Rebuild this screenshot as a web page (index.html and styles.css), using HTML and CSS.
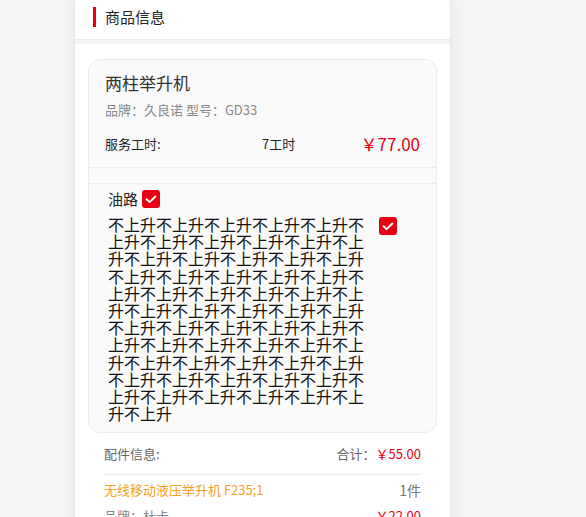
FILE: index.html
```html
<!DOCTYPE html>
<html lang="zh-CN">

<head>
    <meta charset="UTF-8">
    <meta name="viewport" content="width=device-width, initial-scale=1.0">
    <title>商品信息</title>
    <link rel="stylesheet" href="styles.css">
</head>

<body>
    <div class="page">
        <div class="section-head">
            <span class="head-bar"></span>
            <span class="head-title">商品信息</span>
        </div>
        <div class="section-gap"></div>

        <div class="content">
            <div class="goods-card">
                <div class="goods-info">
                    <div class="goods-name">两柱举升机</div>
                    <div class="goods-brand">品牌：久良诺 型号：GD33</div>
                    <div class="service-row">
                        <span class="service-label">服务工时:</span>
                        <span class="service-hours">7工时</span>
                        <span class="service-price">￥77.00</span>
                    </div>
                </div>
                <div class="card-split"></div>
                <div class="options">
                    <div class="option-head">
                        <span>油路</span>
                        <span class="check">
                            <svg viewBox="0 0 18 18" width="18" height="18">
                                <path d="M4.6 9.2l3 2.9 5.8-5.6" fill="none" stroke="#fff" stroke-width="1.9" stroke-linecap="round" stroke-linejoin="round" />
                            </svg>
                        </span>
                    </div>
                    <div class="option-row">
                        <div class="option-text">不上升不上升不上升不上升不上升不上升不上升不上升不上升不上升不上升不上升不上升不上升不上升不上升不上升不上升不上升不上升不上升不上升不上升不上升不上升不上升不上升不上升不上升不上升不上升不上升不上升不上升不上升不上升不上升不上升不上升不上升不上升不上升不上升不上升不上升不上升不上升不上升不上升不上升不上升不上升不上升不上升不上升不上升不上升不上升不上升不上升</div>
                        <span class="check">
                            <svg viewBox="0 0 18 18" width="18" height="18">
                                <path d="M4.6 9.2l3 2.9 5.8-5.6" fill="none" stroke="#fff" stroke-width="1.9" stroke-linecap="round" stroke-linejoin="round" />
                            </svg>
                        </span>
                    </div>
                </div>
            </div>

            <div class="parts">
                <div class="parts-head">
                    <span>配件信息:</span>
                    <span>合计：<em class="price">￥55.00</em></span>
                </div>
                <div class="part-row">
                    <span class="part-name">无线移动液压举升机 F235;1</span>
                    <span class="part-count">1件</span>
                </div>
                <div class="part-row">
                    <span class="part-brand">品牌：杜卡</span>
                    <em class="price">￥22.00</em>
                </div>
            </div>
        </div>
    </div>
</body>

</html>
```

FILE: styles.css
```css
body {
    margin: 0;
    background: #f4f4f4;
    font-family: "Noto Sans CJK SC", "Noto Sans", sans-serif;
    color: #222;
}

.page {
    width: 375px;
    min-height: 100vh;
    margin-left: 74px;
    background: #fff;
    border-left: 1px solid #e8e8e8;
    border-right: 1px solid #e8e8e8;
    box-shadow: 0 0 14px rgba(0, 0, 0, 0.05);
}

.section-head {
    height: 40px;
    display: flex;
    align-items: center;
    padding-left: 18px;
    border-bottom: 1px solid #ececec;
    box-sizing: border-box;
}

.head-bar {
    width: 3px;
    height: 20px;
    background: #e60012;
    margin-top: -6px;
}

.head-title {
    font-size: 15px;
    margin-left: 9px;
    margin-top: -6px;
}

.section-gap {
    height: 4px;
    background: #f5f5f5;
}

.content {
    padding: 15px 13px 0;
}

.goods-card {
    background: #fafafa;
    border: 1px solid #ebebeb;
    border-radius: 12px;
    overflow: hidden;
}

.goods-info {
    padding: 11px 16px 12px;
    border-bottom: 1px solid #ececec;
}

.goods-name {
    font-size: 17px;
    line-height: 24px;
    color: #333;
}

.goods-brand {
    font-size: 13px;
    line-height: 20px;
    color: #888;
    margin-top: 5px;
}

.service-row {
    display: flex;
    align-items: center;
    margin-top: 13px;
    font-size: 13px;
    line-height: 22px;
}

.service-label {
    width: 157px;
}

.service-hours {
    flex: 1;
}

.service-price {
    color: #e60012;
    font-size: 17px;
}

.card-split {
    height: 15px;
    border-bottom: 1px solid #ececec;
}

.options {
    padding: 5px 16px 10px 19px;
}

.option-head {
    display: flex;
    align-items: center;
    gap: 4px;
    font-size: 15px;
    line-height: 20px;
}

.check {
    width: 18px;
    height: 18px;
    border-radius: 3px;
    background: #e60012;
    display: inline-flex;
}

.option-row {
    display: flex;
    align-items: flex-start;
    margin-top: 7px;
}

.option-text {
    width: 258px;
    font-size: 16px;
    line-height: 17.2px;
    word-break: break-all;
    color: #111;
}

.option-row .check {
    margin-left: 13px;
    margin-top: 1px;
}

.parts {
    padding: 10px 16px 0;
}

.parts-head {
    display: flex;
    justify-content: space-between;
    font-size: 13px;
    line-height: 22px;
    color: #666;
    padding-bottom: 9px;
    border-bottom: 1px solid #ececec;
}

.price {
    font-style: normal;
    color: #e60012;
}

.part-row {
    display: flex;
    justify-content: space-between;
    font-size: 13px;
    line-height: 22px;
    color: #777;
    margin-top: 4px;
}

.part-name {
    color: #f5a11f;
}

.part-count {
    font-size: 14px;
}

.part-brand {
    color: #888;
}
```
